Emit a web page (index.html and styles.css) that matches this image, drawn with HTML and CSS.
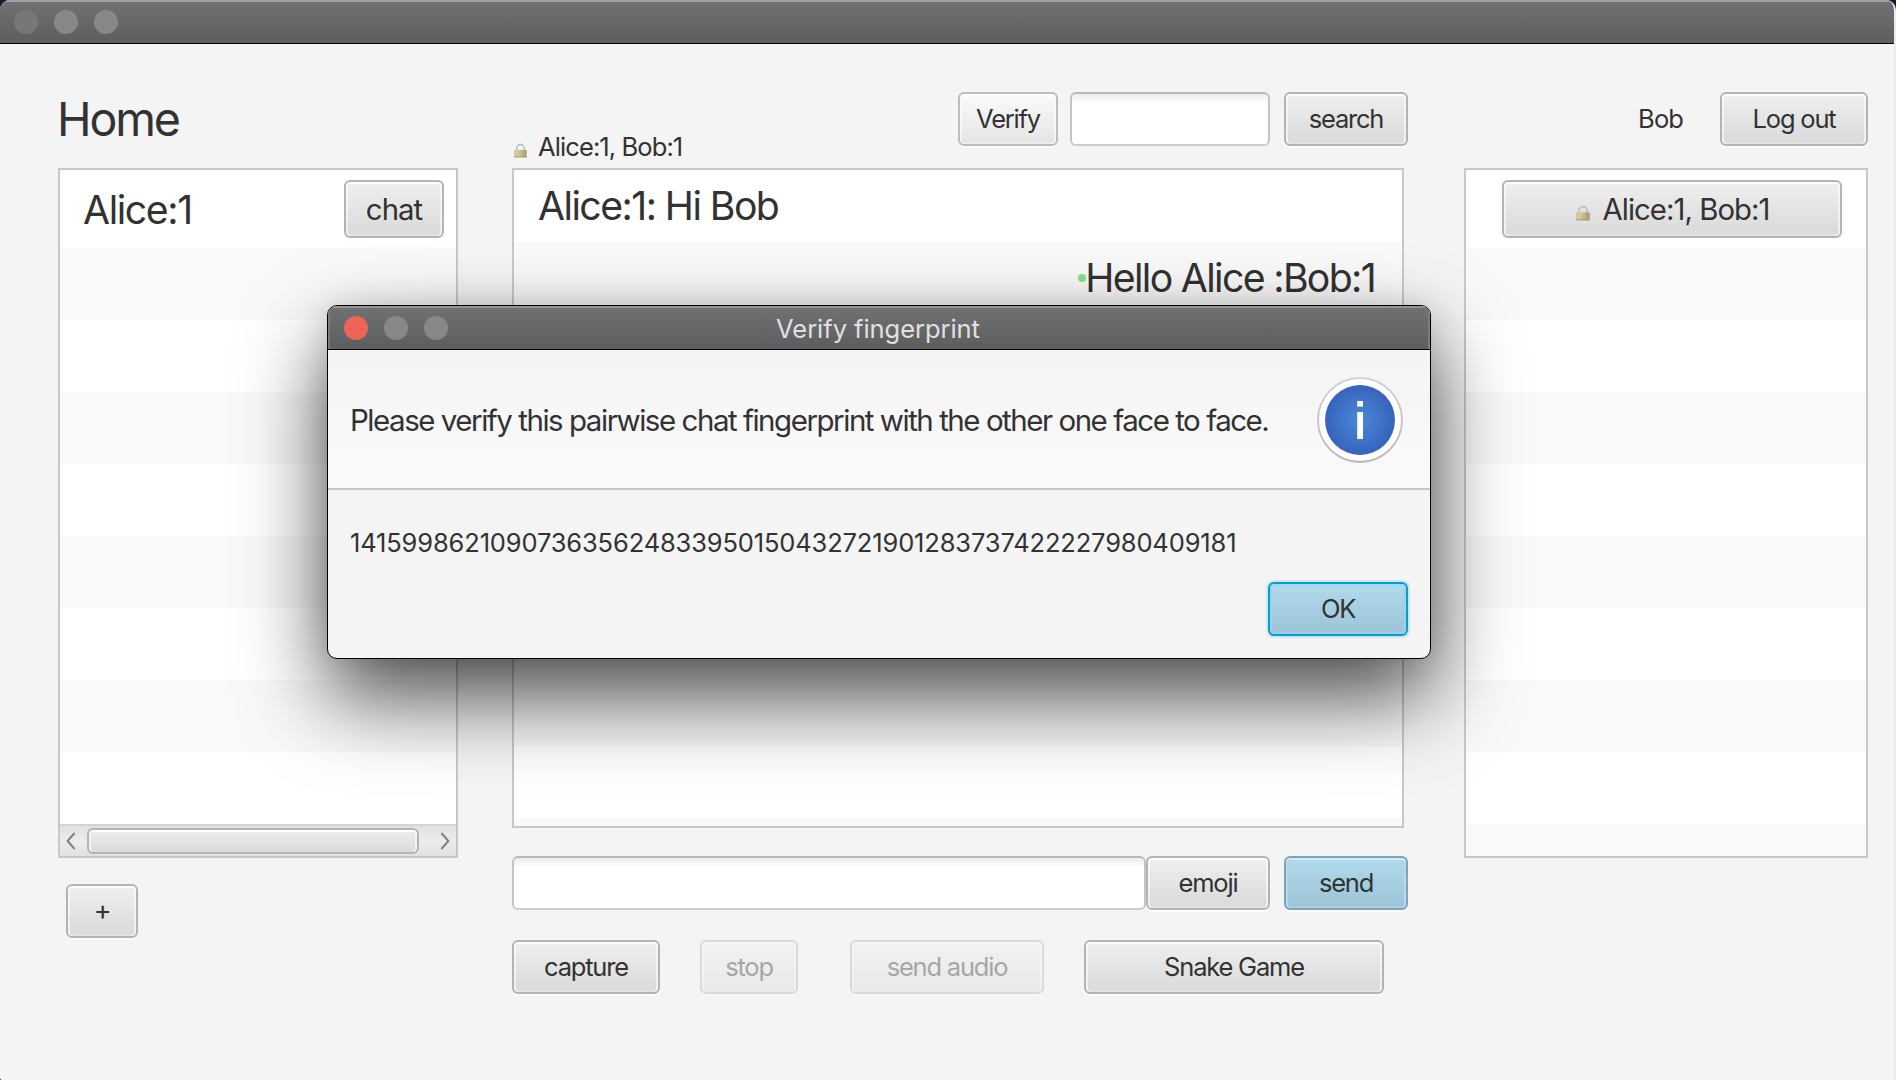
FILE: index.html
```html
<!DOCTYPE html>
<html lang="en">
<head>
<meta charset="utf-8">
<title>Home</title>
<link rel="stylesheet" href="styles.css">
</head>
<body>
<svg width="0" height="0" class="defs" aria-hidden="true">
  <defs>
    <linearGradient id="brass" x1="0" x2="1" y1="0" y2="0">
      <stop offset="0" stop-color="#c9c08c"/><stop offset=".2" stop-color="#d6d09f"/><stop offset="1" stop-color="#a39c6c"/>
    </linearGradient>
    <symbol id="lock" viewBox="0 0 14 16">
      <path d="M3 8V5.6a4 4 0 0 1 8 0V8" fill="none" stroke="#b4bcc4" stroke-width="1.5"/>
      <rect x="0.3" y="7.4" width="13.4" height="8" fill="url(#brass)"/>
      <rect x="0.3" y="14.2" width="13.4" height="1.2" fill="#aaa377"/>
    </symbol>
  </defs>
</svg>
<div class="window">
  <header class="titlebar">
    <span class="light dim"></span><span class="light"></span><span class="light"></span>
  </header>
  <main class="content">
    <section class="contacts">
      <div class="bar"><h1 class="home">Home</h1></div>
      <div class="list">
        <div class="rows">
          <div class="row tall"><span class="name">Alice:1</span><button class="btn large chat">chat</button></div>
        </div>
        <div class="scrollbar">
          <svg width="10" height="18" viewBox="0 0 10 18"><path d="M8.6 1 1.6 9l7 8" fill="none" stroke="#828282" stroke-width="2"/></svg>
          <span class="thumb"></span>
          <svg class="next" width="10" height="18" viewBox="0 0 10 18"><path d="M1.4 1l7 8-7 8" fill="none" stroke="#828282" stroke-width="2"/></svg>
        </div>
      </div>
      <button class="btn plus">+</button>
    </section>

    <section class="conversation">
      <div class="bar">
        <div class="room"><svg class="lock"><use href="#lock"/></svg><span class="room-name">Alice:1, Bob:1</span></div>
        <button class="btn light-btn verify">Verify</button>
        <input class="field query" type="text" aria-label="query">
        <button class="btn search">search</button>
      </div>
      <div class="list messages">
        <div class="rows">
          <div class="row"><span class="msg-in">Alice:1: Hi Bob</span></div>
          <div class="row out"><i class="online"></i><span class="msg-out">Hello Alice :Bob:1</span></div>
        </div>
      </div>
      <div class="compose">
        <input class="field message" type="text" aria-label="message">
        <button class="btn emoji">emoji</button>
        <button class="btn blue send">send</button>
      </div>
      <div class="tools">
        <button class="btn capture">capture</button>
        <button class="btn stop" disabled>stop</button>
        <button class="btn audio" disabled>send audio</button>
        <button class="btn snake">Snake Game</button>
      </div>
    </section>

    <section class="rooms">
      <div class="bar"><span class="user">Bob</span><button class="btn logout">Log out</button></div>
      <div class="list">
        <div class="rows">
          <div class="row tall centered"><button class="btn large room-btn"><svg class="lock"><use href="#lock"/></svg><span>Alice:1, Bob:1</span></button></div>
        </div>
      </div>
    </section>
  </main>
</div>

<div class="dialog" role="dialog" aria-label="Verify fingerprint">
  <header class="dialog-title">
    <div class="lights"><span class="light close"></span><span class="light"></span><span class="light"></span></div>
    <span class="caption">Verify fingerprint</span>
  </header>
  <div class="dialog-head">
    <p class="prompt">Please verify this pairwise chat fingerprint with the other one face to face.</p>
    <svg class="info" width="88" height="88" viewBox="0 0 88 88">
      <defs>
        <radialGradient id="blue"><stop offset="0" stop-color="#4b88da"/><stop offset="1" stop-color="#3763bd"/></radialGradient>
        <linearGradient id="rim" x1="0" x2="0" y1="0" y2="1"><stop offset="0" stop-color="#d2d2d2"/><stop offset="1" stop-color="#b6b6b6"/></linearGradient>
      </defs>
      <circle cx="44" cy="44" r="42" fill="#fff" stroke="url(#rim)" stroke-width="1.8"/>
      <circle cx="44" cy="44" r="35" fill="url(#blue)"/>
      <rect x="41.2" y="25" width="5.8" height="5.6" fill="#fff"/>
      <rect x="41.2" y="36" width="5.8" height="27" fill="#fff"/>
    </svg>
  </div>
  <div class="dialog-body">
    <p class="fingerprint">141599862109073635624833950150432721901283737422227980409181</p>
    <button class="btn blue ok">OK</button>
  </div>
</div>
</body>
</html>
```
FILE: styles.css
```css
* { box-sizing: border-box; }
html, body { margin: 0; width: 1896px; height: 1080px; overflow: hidden; }
body { background: #141c30; font-family: Inter, "Liberation Sans", sans-serif; font-size: 25.5px; letter-spacing: -0.9px; color: #323232; }
.defs { position: absolute; }
h1, p { margin: 0; font-weight: 400; }

.window { width: 1896px; height: 1080px; display: flex; flex-direction: column; background: #f4f4f4; border-radius: 10px 10px 0 2px; border-right: 2px solid #e9ebed; overflow: hidden; }
.titlebar { height: 44px; flex: none; display: flex; gap: 16px; padding: 10px 0 0 14px; background: linear-gradient(#717274, #5c5d5e); border-bottom: 1px solid #000; box-shadow: inset 0 2px 0 #a0a1a2; }
.light { width: 24px; height: 24px; border-radius: 50%; background: #868787; }
.light.dim { background: #767778; }
.light.close { background: #ee6558; }

.content { flex: 1; display: grid; grid-template-columns: 400px 896px 404px; column-gap: 54px; padding: 48px 0 0 58px; }
.rooms { margin-left: 2px; margin-right: -2px; }
.bar { height: 76px; display: flex; align-items: flex-start; }
.home { margin-left: -1px; font-size: 46.5px; line-height: 54px; letter-spacing: -2.1px; }

.btn { height: 54px; padding: 0; border: 2px solid #b4b4b4; border-radius: 6px; background: linear-gradient(#efefef, #d9d9d9) padding-box; box-shadow: inset 0 2px 0 #fdfdfd, inset 2px 0 0 rgba(255,255,255,.55), inset -2px 0 0 rgba(255,255,255,.55), inset 0 -2px 0 rgba(255,255,255,.25), 0 2px 0 #fcfcfc; color: #323232; font: inherit; letter-spacing: -1.2px; line-height: 50px; text-align: center; }
.btn.large { height: 58px; font-size: 29.3px; line-height: 55px; }
.btn.light-btn { background: linear-gradient(#fbfbfb, #e4e4e4); border-color: #bdbdbd; }
.btn.blue { border-color: #80a5b8; background: linear-gradient(#b1daec, #9cc3d7); box-shadow: inset 0 2px 0 #d3eaf4, inset 2px 0 0 #b5d9e8, inset -2px 0 0 #b5d9e8, inset 0 -2px 0 #a9cfe1, 0 2px 0 #fcfcfc; }
.btn:disabled { opacity: .4; }
.field { height: 54px; border: 2px solid #c4c4c4; border-top-color: #b9b9b9; border-bottom-color: #cdcdcd; border-radius: 6px; background: linear-gradient(#ebebeb, #fff 9px); padding: 0 12px; font: inherit; outline: 0; }

.list { height: 690px; border: 2px solid #c8c8c8; background: #fff; display: flex; flex-direction: column; }
.rows { flex: 1; background: repeating-linear-gradient(#f9f9f9 0 72px, #fff 72px 144px) 0 78px; }
.messages { width: 892px; height: 660px; }
.messages .rows { background-position: 0 72px; }
.row { height: 72px; display: flex; align-items: center; padding: 0 27px 0 24px; background: #fff; font-size: 39.2px; line-height: 72px; letter-spacing: -1.55px; }
.row.tall { height: 78px; line-height: 73px; }
.row.out { background: #f9f9f9; justify-content: flex-end; letter-spacing: -1.65px; }
.row.centered { padding: 0 24px 0 36px; }
.row .btn { letter-spacing: -0.95px; }
.contacts .row { justify-content: space-between; padding: 0 12px 0 23px; letter-spacing: -1.4px; }
.chat { width: 100px; }
.room-btn { width: 340px; display: flex; align-items: center; justify-content: center; gap: 13px; }
.room-btn .lock { width: 14px; height: 16px; margin: 8px 0 0 1px; }
.online { width: 8px; height: 8px; border-radius: 50%; background: #8be28b; margin-right: -1px; }

.scrollbar { height: 32px; display: flex; align-items: center; padding: 0 6px; border-top: 2px solid #d4d4d4; background: linear-gradient(#e1e1e1, #ececec 50%, #e1e1e1); }
.thumb { width: 332px; height: 26px; margin: 0 0 0 11px; border: 2px solid #b4b4b4; border-radius: 6px; background: linear-gradient(#eee, #dadada); box-shadow: inset 0 2px 0 #fdfdfd, inset 2px 0 0 #f2f2f2, inset -2px 0 0 #f2f2f2; }
.next { margin-left: auto; }
.plus { width: 72px; margin: 26px 0 0 8px; font-size: 27px; }

.room { width: 446px; display: flex; padding: 39px 0 0 2px; line-height: 32px; }
.room .lock { width: 13px; height: 15px; margin: 12px 11px 0 0; }
.verify { width: 100px; }
.query { width: 200px; margin: 0 14px 0 12px; }
.search { width: 124px; }
.compose { display: flex; margin-top: 28px; }
.message { width: 634px; }
.emoji { width: 124px; }
.send { width: 124px; margin-left: 14px; }
.tools { display: flex; margin-top: 30px; }
.capture { width: 148px; margin-right: 40px; }
.stop { width: 98px; margin-right: 52px; }
.audio { width: 194px; margin-right: 40px; }
.snake { width: 300px; }
.rooms .bar { justify-content: flex-end; line-height: 54px; }
.user { margin-right: 37px; }
.logout { width: 148px; }

.dialog { position: absolute; left: 327px; top: 305px; width: 1104px; height: 354px; border: 1px solid #000; border-radius: 10px; background: #f4f4f4; overflow: hidden; box-shadow: 0 38px 84px rgba(0,0,0,.7), 0 0 30px rgba(0,0,0,.1); }
.dialog-title { height: 44px; display: grid; grid-template-columns: 1fr auto 1fr; background: linear-gradient(#717274, #5c5d5e); border-bottom: 1px solid #000; box-shadow: inset 0 2px 0 #949695, inset 2px 0 0 #7b7c7d, inset -2px 0 0 #7b7c7d; }
.lights { display: flex; gap: 16px; padding: 10px 0 0 16px; }
.caption { margin-right: 2px; color: #e0e0e0; line-height: 46px; letter-spacing: -0.05px; }
.dialog-head { height: 140px; display: flex; align-items: center; justify-content: space-between; padding: 0 26px 0 22px; border-bottom: 2px solid #c8c8c8; background: linear-gradient(#f4f4f4, #fafafa); }
.prompt { padding-top: 2px; font-size: 29.5px; letter-spacing: -1.47px; white-space: nowrap; }
.info { margin-top: 2px; }
.dialog-body { display: flex; flex-direction: column; padding: 32px 22px 0; }
.fingerprint { line-height: 42px; letter-spacing: -0.15px; }
.btn.ok { width: 140px; height: 54px; margin-top: 18px; align-self: flex-end; border-color: #039ed3; box-shadow: 0 0 0 2px #cfe7ef, inset 0 2px 0 #a3d9ec, inset 2px 0 0 #a3d0e2, inset -2px 0 0 #a3d0e2, inset 0 -2px 0 #a1cadc; }
```
